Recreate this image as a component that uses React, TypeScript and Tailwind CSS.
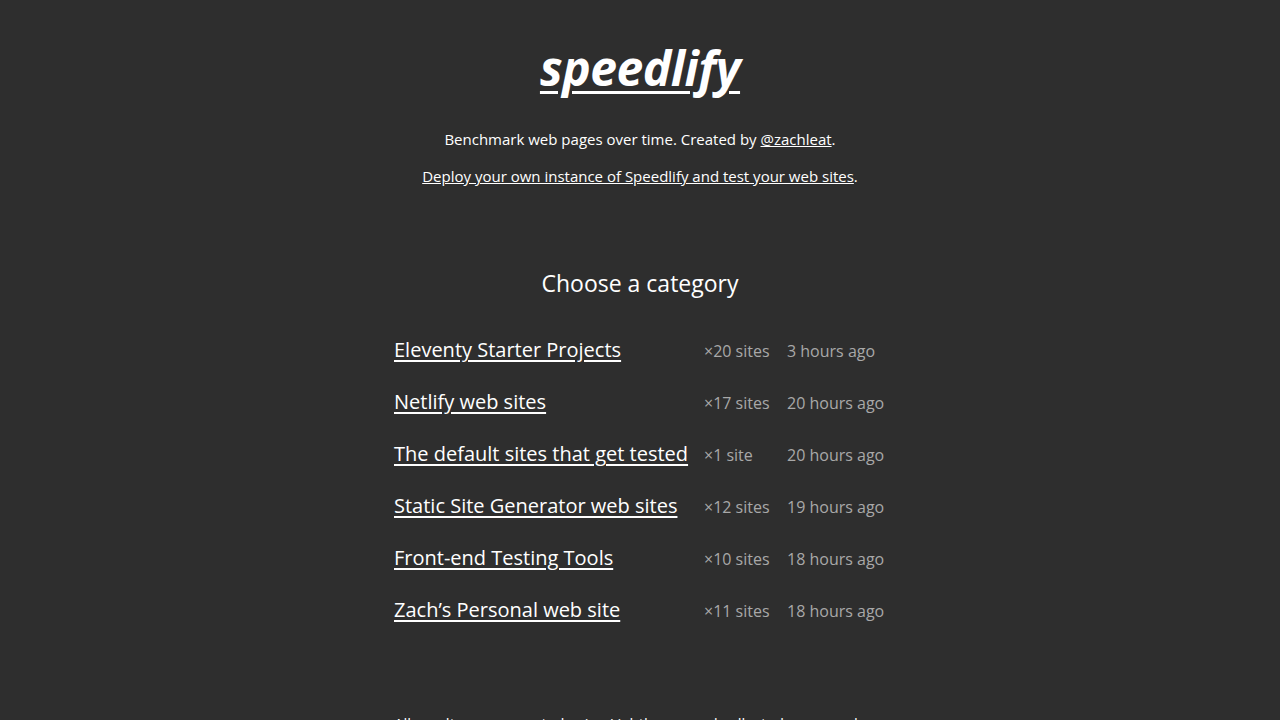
import React from 'react';

type Category = {
  name: string;
  count: string;
  ago: string;
};

const CATEGORIES: Category[] = [
  { name: 'Eleventy Starter Projects', count: '×20 sites', ago: '3 hours ago' },
  { name: 'Netlify web sites', count: '×17 sites', ago: '20 hours ago' },
  { name: 'The default sites that get tested', count: '×1 site', ago: '20 hours ago' },
  { name: 'Static Site Generator web sites', count: '×12 sites', ago: '19 hours ago' },
  { name: 'Front-end Testing Tools', count: '×10 sites', ago: '18 hours ago' },
  { name: 'Zach’s Personal web site', count: '×11 sites', ago: '18 hours ago' },
];

export default function App() {
  return (
    <div className="min-h-screen bg-[#2e2e2e] text-white font-['Open_Sans',sans-serif]">
      <header className="flex flex-col items-center pt-[36px]">
        <h1 className="text-[48px] leading-[64px] font-bold italic tracking-[-0.5px]">
          <a href="#" className="underline underline-offset-[5px] decoration-[3px]">speedlify</a>
        </h1>
        <p className="mt-[27px] text-[15px] leading-[24px]">
          Benchmark web pages over time. Created by{' '}
          <a href="#" className="underline">@zachleat</a>.
        </p>
        <p className="mt-[13px] text-[15px] leading-[24px]">
          <a href="#" className="underline">Deploy your own instance of Speedlify and test your web sites</a>.
        </p>
      </header>

      <main className="flex flex-col items-center mt-[79px]">
        <h2 className="text-[23px] leading-[32px]">Choose a category</h2>
        <div className="w-[492px] mt-[35px] flex flex-col gap-[20px]">
          {CATEGORIES.map((c) => (
            <div key={c.name} className="flex items-baseline h-[32px]">
              <a href="#" className="w-[310px] shrink-0 text-[20px] leading-[32px] underline underline-offset-[3px]">
                {c.name}
              </a>
              <span className="w-[83px] shrink-0 text-[16px] text-[#a8a8a8]">{c.count}</span>
              <span className="text-[16px] text-[#a8a8a8]">{c.ago}</span>
            </div>
          ))}
        </div>
        <p className="w-[492px] mt-[85px] text-[15px] leading-[24px] text-white">
          All results are generated using Lighthouse and collected on a regular schedule.
        </p>
      </main>
    </div>
  );
}
